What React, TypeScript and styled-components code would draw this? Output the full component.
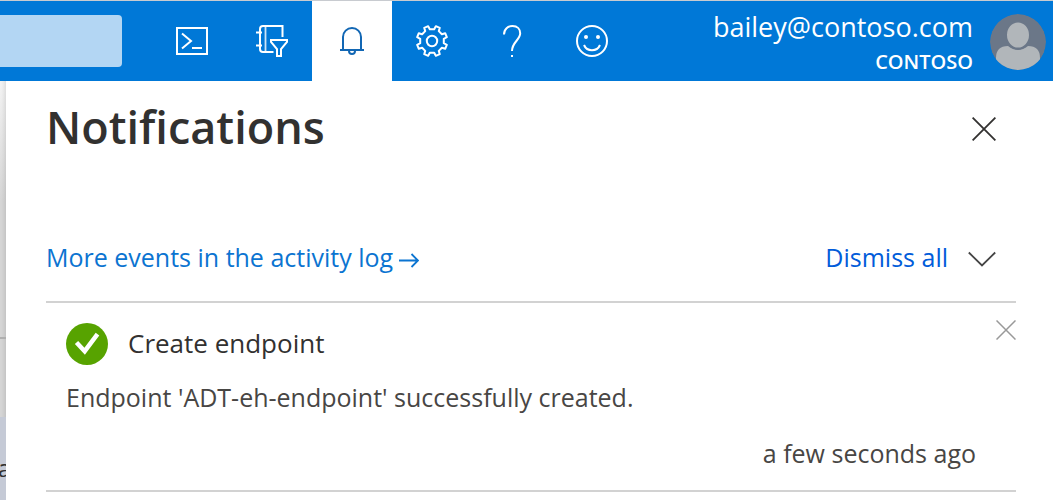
import React from "react";
import styled, { createGlobalStyle } from "styled-components";

const GlobalStyle = createGlobalStyle`
  * { box-sizing: border-box; }
  html, body, #root { height: 100%; }
  body {
    margin: 0;
    background: #fff;
    color: #323130;
    font-family: "Segoe UI", "Open Sans", "Noto Sans", sans-serif;
    font-size: 25px;
    line-height: 34px;
  }
  button {
    padding: 0;
    border: 0;
    background: none;
    font: inherit;
    color: inherit;
    cursor: pointer;
  }
  svg { display: block; fill: none; stroke: currentColor; }
`;

const Page = styled.div`
  display: flex;
  flex-direction: column;
  min-height: 100%;
  overflow: hidden;
`;

const TopBar = styled.header`
  display: flex;
  align-items: center;
  height: 81px;
  padding-right: 7px;
  border-top: 1px solid #c8cbd0;
  background: #0078d7;
  color: #fff;
`;

const Search = styled.input`
  width: 122px;
  height: 52px;
  margin: 0 30px 0 0;
  padding: 0 12px;
  border: 0;
  border-radius: 0 4px 4px 0;
  background: #b3d6f3;
  font: inherit;
`;

const Tools = styled.nav`
  display: flex;
  align-self: stretch;
`;

const ToolButton = styled.button<{ $active?: boolean }>`
  display: flex;
  align-items: center;
  justify-content: center;
  width: 80px;
  background: ${(p) => (p.$active ? "#fff" : "transparent")};
  color: ${(p) => (p.$active ? "#1267b4" : "#fff")};
`;

const Account = styled.button`
  display: flex;
  align-items: center;
  gap: 17px;
  margin-left: auto;
  text-align: right;
`;

const AccountText = styled.div`
  padding-top: 4px;
`;

const Email = styled.div`
  font-size: 27px;
  line-height: 38px;
`;

const Tenant = styled.div`
  font-size: 20px;
  font-weight: 600;
  line-height: 32px;
`;

const Body = styled.div`
  display: flex;
  flex: 1;
`;

const Backdrop = styled.div`
  display: flex;
  flex-direction: column;
  width: 6px;
  overflow: hidden;
  background: linear-gradient(#f4f4f4, #d6d6d6 120px);
  box-shadow: inset -5px 0 5px -4px #00000022;
`;

const BackdropRule = styled.div`
  margin-top: 256px;
  height: 2px;
  background: #b0b0b0;
`;

const BackdropItem = styled.div`
  flex: 1;
  margin-top: 78px;
  padding-top: 34px;
  background: #c5cad6;
  font-size: 23px;
  text-indent: -2px;
`;

const Panel = styled.main`
  flex: 1;
  padding: 15px 37px 0 40px;
`;

const PanelHeader = styled.div`
  display: flex;
  align-items: center;
  justify-content: space-between;
  padding-right: 20px;
`;

const Title = styled.h1`
  margin: 0;
  padding-bottom: 4px;
  font-size: 45px;
  font-weight: 600;
  line-height: 62px;
`;

const Actions = styled.div`
  display: flex;
  align-items: center;
  justify-content: space-between;
  margin-top: 78px;
  padding-bottom: 27px;
  border-bottom: 2px solid #d2d2d2;
`;

const LogLink = styled.a`
  display: flex;
  align-items: center;
  gap: 6px;
  color: #0b74d1;
  text-decoration: none;
`;

const DismissGroup = styled.div`
  display: flex;
  align-items: center;
  gap: 20px;
  padding-right: 20px;
  color: #444;
`;

const DismissButton = styled.button`
  color: #015cda;
`;

const Card = styled.article`
  padding: 17px 0 20px 20px;
  border-bottom: 2px solid #d2d2d2;
`;

const CardHeader = styled.div`
  display: flex;
  align-items: flex-start;
`;

const CardTitle = styled.h2`
  flex: 1;
  margin: 0;
  padding-left: 20px;
  font-size: 26px;
  font-weight: 400;
  line-height: 46px;
`;

const CardClose = styled.button`
  color: #999;
`;

const Message = styled.p`
  margin: 14px 0 22px;
  color: #484644;
`;

const Time = styled.time`
  display: block;
  padding-right: 40px;
  color: #484644;
  text-align: right;
`;

const gearPath =
  Array.from({ length: 8 }, (_, i) => {
    const mid = i * 45 + 22.5;
    return [
      [mid - 12, 12],
      [mid - 8, 15.3],
      [mid + 8, 15.3],
      [mid + 12, 12],
    ]
      .map(([deg, r]) => {
        const a = (deg * Math.PI) / 180;
        return `${(16 + r * Math.sin(a)).toFixed(2)} ${(16 - r * Math.cos(a)).toFixed(2)}`;
      })
      .join("L");
  }).reduce((d, tooth) => d + (d ? "L" : "M") + tooth, "") + "Z";

const ShellIcon = () => (
  <svg width="32" height="32" viewBox="0 0 32 32" strokeWidth="2">
    <path d="M1 3H31V29H1Z" />
    <path d="M6 8.500L15 16L6 23.500M16 23H26" />
  </svg>
);

const DirectoryIcon = () => (
  <svg width="32" height="32" viewBox="0 0 32 32" strokeWidth="2">
    <path d="M26.500 12V1H7Q4 1 4 4V24Q4 27 7 27H17.500" />
    <path d="M0 7.500H6M0 20.500H6" />
    <path d="M9.500 1V27" strokeWidth="1.800" opacity="0.8" />
    <path d="M15 15H31V17L25 24V31H21V24L15 17Z" />
  </svg>
);

const BellIcon = () => (
  <svg width="32" height="32" viewBox="0 0 32 32" strokeWidth="2">
    <path d="M4 25H28M7 25V12A9 9 0 0 1 25 12V25M13 26A3 3 0 0 0 19 26" />
  </svg>
);

const GearIcon = () => (
  <svg width="32" height="32" viewBox="0 0 32 32" strokeWidth="2" strokeLinejoin="round">
    <path d={gearPath} />
    <circle cx="16" cy="16" r="5.200" />
  </svg>
);

const HelpIcon = () => (
  <svg width="32" height="32" viewBox="0 0 32 32" strokeWidth="2">
    <path d="M8 9.500C8 4 12 1 16.500 1C21.500 1 24.200 4.200 24.200 8.300C24.200 15 16 17 16 26" />
    <path d="M16 30V32" />
  </svg>
);

const SmileIcon = () => (
  <svg width="32" height="32" viewBox="0 0 32 32" strokeWidth="2">
    <circle cx="16" cy="16" r="15" />
    <path d="M8 20C11 27 21 27 24 20" />
    <circle cx="10" cy="12" r="2" fill="currentColor" stroke="none" />
    <circle cx="22" cy="12" r="2" fill="currentColor" stroke="none" />
  </svg>
);

const Avatar = () => (
  <svg width="56" height="58" viewBox="0 -2 56 58">
    <defs>
      <clipPath id="avatar-clip">
        <circle cx="28" cy="28" r="28" />
      </clipPath>
    </defs>
    <g clipPath="url(#avatar-clip)" stroke="none">
      <circle cx="28" cy="28" r="28" fill="#6b7788" />
      <path d="M6 56V44Q6 32 18 32Q28 40 38 32Q50 32 50 44V56Z" fill="#b1b6ba" />
      <ellipse
        cx="28"
        cy="21"
        rx="12"
        ry="13.500"
        fill="#b1b6ba"
        stroke="#6b7788"
        strokeWidth="2"
      />
    </g>
  </svg>
);

const CloseIcon = ({ size, weight }: { size: number; weight: number }) => (
  <svg width={size} height={size} viewBox="0 0 24 24" strokeWidth={weight}>
    <path d="M0.600 0.600L23.400 23.400M23.400 0.600L0.600 23.400" />
  </svg>
);

const ArrowIcon = () => (
  <svg width="20" height="34" viewBox="0 0 20 34" strokeWidth="1.800">
    <path d="M0 20.500H19M12.500 14L19 20.500L12.500 27" />
  </svg>
);

const ChevronIcon = () => (
  <svg width="28" height="20" viewBox="0 0 28 20" strokeWidth="1.800">
    <path d="M0.800 5.500L14 18.500L27.200 5.500" />
  </svg>
);

const SuccessIcon = () => (
  <svg width="42" height="46" viewBox="0 0 42 46" role="img" aria-label="Success">
    <circle cx="21" cy="24" r="21" fill="#57a300" stroke="none" />
    <path d="M10.500 22.500L18.700 31.200L31.500 14.200" stroke="#fff" strokeWidth="4.500" />
  </svg>
);

const tools = [
  { label: "Cloud Shell", icon: <ShellIcon /> },
  { label: "Directories and subscriptions", icon: <DirectoryIcon /> },
  { label: "Notifications", icon: <BellIcon />, active: true },
  { label: "Settings", icon: <GearIcon /> },
  { label: "Help", icon: <HelpIcon /> },
  { label: "Feedback", icon: <SmileIcon /> },
];

export default function App() {
  return (
    <Page>
      <GlobalStyle />
      <TopBar>
        <Search type="search" aria-label="Search" />
        <Tools>
          {tools.map((t) => (
            <ToolButton key={t.label} type="button" aria-label={t.label} $active={t.active}>
              {t.icon}
            </ToolButton>
          ))}
        </Tools>
        <Account type="button">
          <AccountText>
            <Email>bailey@contoso.com</Email>
            <Tenant>CONTOSO</Tenant>
          </AccountText>
          <Avatar />
        </Account>
      </TopBar>
      <Body>
        <Backdrop>
          <BackdropRule />
          <BackdropItem>a</BackdropItem>
        </Backdrop>
        <Panel>
          <PanelHeader>
            <Title>Notifications</Title>
            <button type="button" aria-label="Close">
              <CloseIcon size={24} weight={1.8} />
            </button>
          </PanelHeader>
          <Actions>
            <LogLink href="#activity-log">
              More events in the activity log
              <ArrowIcon />
            </LogLink>
            <DismissGroup>
              <DismissButton type="button">Dismiss all</DismissButton>
              <button type="button" aria-label="More dismiss options">
                <ChevronIcon />
              </button>
            </DismissGroup>
          </Actions>
          <Card>
            <CardHeader>
              <SuccessIcon />
              <CardTitle>Create endpoint</CardTitle>
              <CardClose type="button" aria-label="Dismiss notification">
                <CloseIcon size={20} weight={1.8} />
              </CardClose>
            </CardHeader>
            <Message>Endpoint 'ADT-eh-endpoint' successfully created.</Message>
            <Time>a few seconds ago</Time>
          </Card>
        </Panel>
      </Body>
    </Page>
  );
}
